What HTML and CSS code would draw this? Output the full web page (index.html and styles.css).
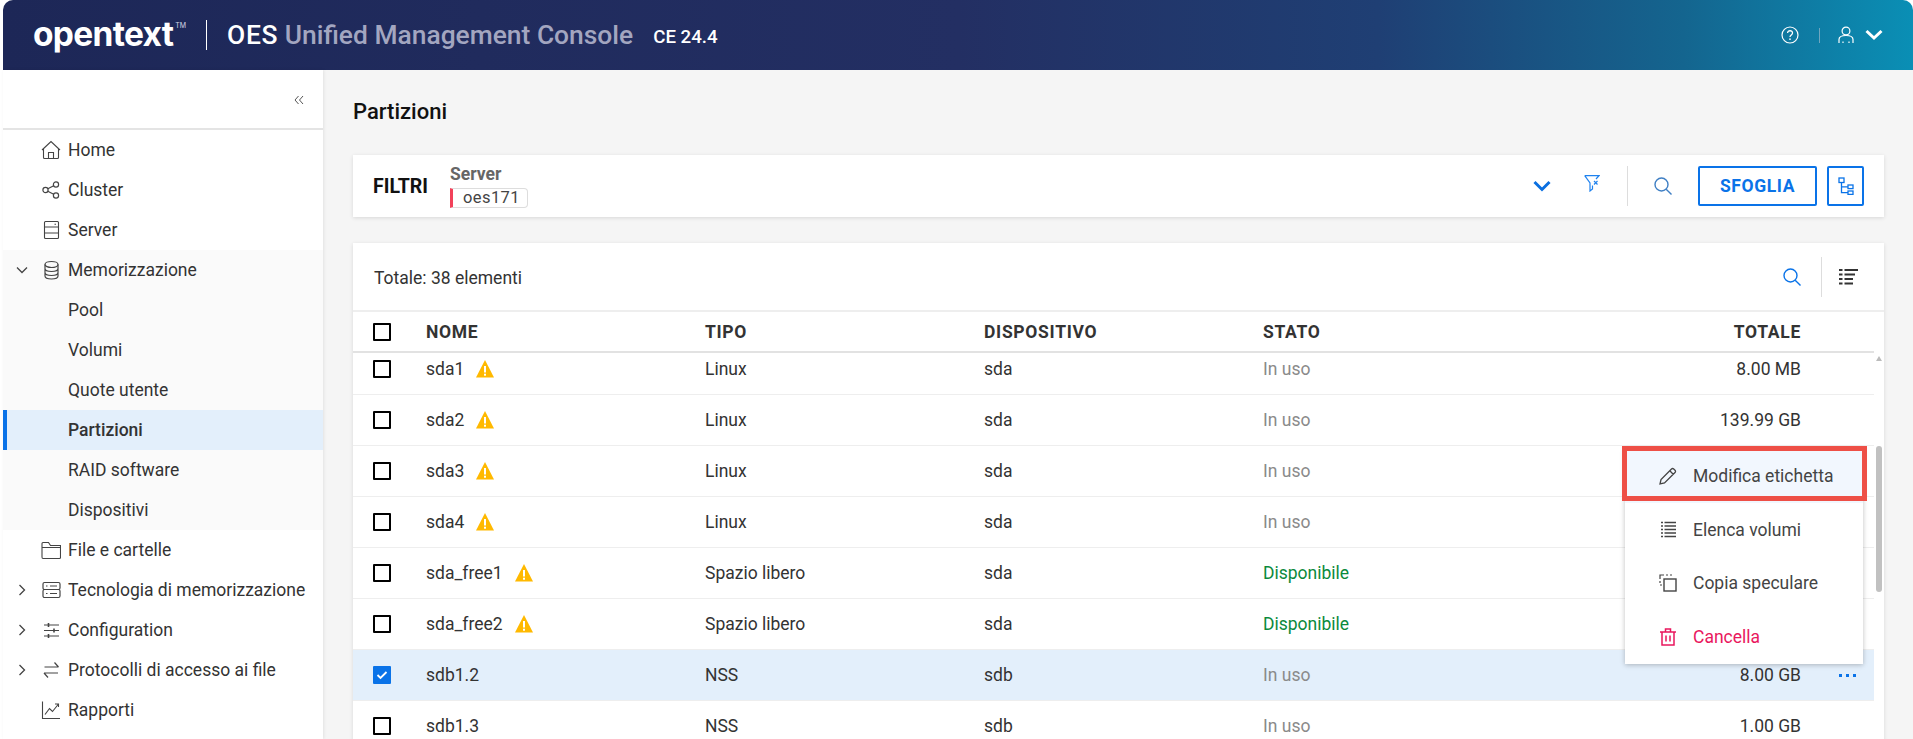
FILE: index.html

```html
<!DOCTYPE html>
<html lang="it">
<head>
  <meta charset="UTF-8" />
  <title>OES Unified Management Console</title>
  <link rel="stylesheet" href="styles.css">
</head>
<body>

<svg class="defs" width="0" height="0">
  <symbol id="warn" viewBox="0 0 18 18">
    <path d="M9 0 L18 17.5 H0 Z" fill="#ffb900"/>
    <rect x="8" y="6" width="2" height="6.5" fill="#fff"/>
    <rect x="8" y="13.7" width="2" height="2" fill="#fff"/>
  </symbol>
  <symbol id="chev-right" viewBox="0 0 10 14">
    <path d="M2.5 2 L7.5 7 L2.5 12" fill="none" stroke="currentColor" stroke-width="1.3"/>
  </symbol>
  <symbol id="search" viewBox="0 0 18 18">
    <circle cx="7.5" cy="7.5" r="6.5" fill="none" stroke="currentColor" stroke-width="1.4"/>
    <path d="M12.2 12.2 L17.5 17.5" stroke="currentColor" stroke-width="1.4"/>
  </symbol>
</svg>

<div class="app">
  <header class="topbar">
    <div class="logo">opentext<sup>TM</sup></div>
    <div class="logo-sep"></div>
    <div class="product"><b>OES</b> <span>Unified Management Console</span></div>
    <div class="version">CE 24.4</div>
    <div class="top-icons">
      <svg class="ic-help" width="18" height="18" viewBox="0 0 18 18">
        <circle cx="9" cy="9" r="8" fill="none" stroke="#fff" stroke-width="1.2"/>
        <path d="M6.6 7 C6.6 3.9 11.6 4.1 11.5 7 C11.5 9 9 8.9 9 11" fill="none" stroke="#fff" stroke-width="1.3"/>
        <rect x="8.3" y="12.4" width="1.4" height="1.6" fill="#fff"/>
      </svg>
      <div class="top-sep"></div>
      <svg class="ic-user" width="16" height="18" viewBox="0 0 16 18">
        <circle cx="8" cy="5" r="3.9" fill="none" stroke="#fff" stroke-width="1.2"/>
        <path d="M1 17 V13.5 C1 10.5 4 9.5 8 9.5 C12 9.5 15 10.5 15 13.5 V17" fill="none" stroke="#fff" stroke-width="1.2"/>
        <path d="M5 15.5 V17 M11 15.5 V17" stroke="#fff" stroke-width="1.2"/>
      </svg>
      <svg width="18" height="12" viewBox="0 0 18 12">
        <path d="M1.5 2 L9 9 L16.5 2" fill="none" stroke="#fff" stroke-width="3"/>
      </svg>
    </div>
  </header>

  <div class="layout">
    <aside class="sidebar">
      <div class="side-top">
        <svg width="10" height="10" viewBox="0 0 10 10">
          <path d="M4.5 1 L1 5 L4.5 9 M9 1 L5.5 5 L9 9" fill="none" stroke="#555" stroke-width="1"/>
        </svg>
      </div>
      <nav>
        <a class="nav-item">
          <span class="nav-chev"></span>
          <svg class="nav-ic" viewBox="0 0 20 20" fill="none" stroke="currentColor" stroke-width="1.1">
            <path d="M1 10 L10 1.5 L19 10 M2.5 9 V17.5 C2.5 18.2 3 18.5 3.5 18.5 H16.5 C17 18.5 17.5 18.2 17.5 17.5 V9 M7.5 18.5 V12.5 H12.5 V18.5"/>
          </svg>
          Home
        </a>
        <a class="nav-item">
          <span class="nav-chev"></span>
          <svg class="nav-ic" viewBox="0 0 20 20" fill="none" stroke="currentColor" stroke-width="1.2">
            <circle cx="4.5" cy="10" r="2.6"/><circle cx="15" cy="4.5" r="2.6"/><circle cx="15" cy="15.5" r="2.6"/>
            <path d="M6.8 8.8 L12.7 5.7 M6.8 11.2 L12.7 14.3"/>
          </svg>
          Cluster
        </a>
        <a class="nav-item">
          <span class="nav-chev"></span>
          <svg class="nav-ic" viewBox="0 0 20 20" fill="none" stroke="currentColor" stroke-width="1.1">
            <rect x="3.5" y="1.5" width="14" height="17" rx="1"/>
            <path d="M3.5 7 H17.5 M3.5 13 H17.5 M13.5 4.2 H15"/>
          </svg>
          Server
        </a>
        <div class="nav-group">
          <a class="nav-item">
            <span class="nav-chev"><svg class="chev-down" width="10" height="14"><use href="#chev-right"/></svg></span>
            <svg class="nav-ic" viewBox="0 0 20 20" fill="none" stroke="currentColor" stroke-width="1.2">
              <ellipse cx="10.5" cy="4.5" rx="6.5" ry="3"/>
              <path d="M4 4.5 V16 C4 17.6 6.5 19 10.5 19 C14.5 19 17 17.6 17 16 V4.5 M4 8.5 C4 10.2 6.5 11.5 10.5 11.5 C14.5 11.5 17 10.2 17 8.5 M4 12.5 C4 14.2 6.5 15.5 10.5 15.5 C14.5 15.5 17 14.2 17 12.5"/>
            </svg>
            Memorizzazione
          </a>
          <a class="nav-item sub">Pool</a>
          <a class="nav-item sub">Volumi</a>
          <a class="nav-item sub">Quote utente</a>
          <a class="nav-item sub active">Partizioni</a>
          <a class="nav-item sub">RAID software</a>
          <a class="nav-item sub">Dispositivi</a>
        </div>
        <a class="nav-item">
          <span class="nav-chev"></span>
          <svg class="nav-ic" viewBox="0 0 20 20" fill="none" stroke="currentColor" stroke-width="1.1">
            <path d="M1 17 V3.5 C1 3 1.3 2.5 2 2.5 H7.5 L9.5 5.5 H19.5 V17.5 C19.5 18 19 18.5 18.5 18.5 H2 C1.3 18.5 1 18 1 17 Z M1 7.5 H19.5"/>
          </svg>
          File e cartelle
        </a>
        <a class="nav-item">
          <span class="nav-chev"><svg width="10" height="14"><use href="#chev-right"/></svg></span>
          <svg class="nav-ic" viewBox="0 0 20 20" fill="none" stroke="currentColor" stroke-width="1.2">
            <rect x="2" y="2.5" width="17" height="7" rx="1.5"/><rect x="2" y="9.5" width="17" height="8" rx="1.5"/>
            <path d="M5 6 H6.5 M9 6 H16 M5 13.5 H6.5 M9 13.5 H16"/>
          </svg>
          Tecnologia di memorizzazione
        </a>
        <a class="nav-item">
          <span class="nav-chev"><svg width="10" height="14"><use href="#chev-right"/></svg></span>
          <svg class="nav-ic" viewBox="0 0 20 20" fill="none" stroke="currentColor" stroke-width="1.2">
            <path d="M3 5 H18 M3 10.5 H18 M3 16 H18"/>
            <path d="M7.5 3 V7 M13 8.5 V12.5 M7.5 14 V18" stroke-width="1.6"/>
          </svg>
          Configuration
        </a>
        <a class="nav-item">
          <span class="nav-chev"><svg width="10" height="14"><use href="#chev-right"/></svg></span>
          <svg class="nav-ic" viewBox="0 0 20 20" fill="none" stroke="currentColor" stroke-width="1.2">
            <path d="M3.5 7 H17.5 M13.5 2.5 L17.5 7 M17 13 H3 M7 17.5 L3 13"/>
          </svg>
          Protocolli di accesso ai file
        </a>
        <a class="nav-item">
          <span class="nav-chev"></span>
          <svg class="nav-ic" viewBox="0 0 20 20" fill="none" stroke="currentColor" stroke-width="1.1">
            <path d="M1.5 1.5 V18.5 H19"/>
            <path d="M4 14.5 L8.5 8.5 L11.5 11.5 L17.5 4 M14 4 H17.5 V7"/>
          </svg>
          Rapporti
        </a>
      </nav>
    </aside>

    <main class="content">
      <h1 class="page-title">Partizioni</h1>

      <section class="card filter-card">
        <div class="filter-title">FILTRI</div>
        <div class="filter-field">
          <div class="filter-label">Server</div>
          <div class="chip">oes171</div>
        </div>
        <div class="filter-tools">
          <svg class="tool-chev" width="18" height="12" viewBox="0 0 18 12">
            <path d="M1.5 2 L9 9.5 L16.5 2" fill="none" stroke="#0a6fe0" stroke-width="3"/>
          </svg>
          <svg class="tool-filter" width="16" height="17" viewBox="0 0 16 17" fill="none" stroke="#1f82ee" stroke-width="1.2">
            <path d="M0.7 0.7 H15 L12 4 M0.7 0.7 L6 8 V16 L8.5 14 V10.5"/>
            <path d="M10 6 L13.5 9.5 M13.5 6 L10 9.5"/>
          </svg>
          <div class="tool-sep"></div>
          <svg class="tool-search" width="18" height="18"><use href="#search"/></svg>
          <button class="btn-browse">SFOGLIA</button>
          <button class="btn-tree">
            <svg width="16" height="18" viewBox="0 0 16 18" fill="none" stroke="#0a73e8" stroke-width="1.3">
              <rect x="1" y="1" width="5" height="4.5"/><rect x="10" y="8" width="5" height="3.6"/><rect x="10" y="14" width="5" height="3.4"/>
              <path d="M3.5 5.5 V15.7 H10 M3.5 9.8 H10"/>
            </svg>
          </button>
        </div>
      </section>

      <section class="card table-card">
        <div class="table-head">
          <div class="total">Totale: 38 elementi</div>
          <svg class="head-search" width="18" height="18"><use href="#search"/></svg>
          <div class="head-sep"></div>
          <svg class="head-list" width="19" height="18" viewBox="0 0 19 18">
            <path d="M0 2 H3.5 M5.5 2 H19 M0 6.5 H3.5 M5.5 6.5 H16 M0 11 H3.5 M5.5 11 H14 M0 15.5 H3.5 M5.5 15.5 H14" stroke="#333" stroke-width="2"/>
          </svg>
        </div>

        <div class="table-wrap">
          <div class="table-main">
            <div class="row row-head">
              <span class="cb"></span>
              <span>NOME</span><span>TIPO</span><span>DISPOSITIVO</span><span>STATO</span><span class="num">TOTALE</span>
            </div>
            <div class="rows">
              <div class="row">
                <span class="cb"></span>
                <span>sda1<svg class="warn"><use href="#warn"/></svg></span><span>Linux</span><span>sda</span><span class="in-use">In uso</span><span class="num">8.00 MB</span>
              </div>
              <div class="row">
                <span class="cb"></span>
                <span>sda2<svg class="warn"><use href="#warn"/></svg></span><span>Linux</span><span>sda</span><span class="in-use">In uso</span><span class="num">139.99 GB</span>
              </div>
              <div class="row">
                <span class="cb"></span>
                <span>sda3<svg class="warn"><use href="#warn"/></svg></span><span>Linux</span><span>sda</span><span class="in-use">In uso</span>
              </div>
              <div class="row">
                <span class="cb"></span>
                <span>sda4<svg class="warn"><use href="#warn"/></svg></span><span>Linux</span><span>sda</span><span class="in-use">In uso</span>
              </div>
              <div class="row">
                <span class="cb"></span>
                <span>sda_free1<svg class="warn"><use href="#warn"/></svg></span><span>Spazio libero</span><span>sda</span><span class="free">Disponibile</span>
              </div>
              <div class="row">
                <span class="cb"></span>
                <span>sda_free2<svg class="warn"><use href="#warn"/></svg></span><span>Spazio libero</span><span>sda</span><span class="free">Disponibile</span>
              </div>
              <div class="row selected">
                <span class="cb checked">
                  <svg width="12" height="10" viewBox="0 0 12 10"><path d="M1.5 5 L4.5 8 L10.5 2" fill="none" stroke="#fff" stroke-width="1.8"/></svg>
                </span>
                <span>sdb1.2</span><span>NSS</span><span>sdb</span><span class="in-use">In uso</span><span class="num">8.00 GB</span>
                <span class="dots"><i></i><i></i><i></i></span>
              </div>
              <div class="row">
                <span class="cb"></span>
                <span>sdb1.3</span><span>NSS</span><span>sdb</span><span class="in-use">In uso</span><span class="num">1.00 GB</span>
              </div>
            </div>
          </div>
          <div class="scrollbar">
            <div class="scroll-up"></div>
            <div class="scroll-thumb"></div>
          </div>
        </div>

        <div class="menu">
          <div class="menu-item hover">
            <svg width="18" height="18" viewBox="0 0 18 18" fill="none" stroke="#444" stroke-width="1.3">
              <path d="M1 17 L2 12.5 L12.5 2 C13.2 1.3 14 1.3 14.7 2 L16 3.3 C16.7 4 16.7 4.8 16 5.5 L5.5 16 Z M10.8 3.8 L14.2 7.2"/>
            </svg>
            Modifica etichetta
          </div>
          <div class="menu-item">
            <svg width="18" height="18" viewBox="0 0 18 18">
              <path d="M2 1.5 H4 M5.5 1.5 H17 M2 5 H4 M5.5 5 H17 M2 8.5 H4 M5.5 8.5 H17 M2 12 H4 M5.5 12 H17 M2 15.5 H4 M5.5 15.5 H17" stroke="#444" stroke-width="1.3"/>
            </svg>
            Elenca volumi
          </div>
          <div class="menu-item">
            <svg width="18" height="18" viewBox="0 0 18 18" fill="none" stroke="#444" stroke-width="1.2">
              <path d="M1 5 V1 H5 M7 1 H9 M11 1 H13 M1 7 V9 M1 11 H3"/>
              <rect x="5" y="5" width="12" height="12" stroke-width="1.4"/>
            </svg>
            Copia speculare
          </div>
          <div class="menu-item danger">
            <svg width="18" height="18" viewBox="0 0 18 18" fill="none" stroke="#e9175d" stroke-width="1.5">
              <path d="M1 4 H17 M6.5 4 V1 H11.5 V4 M3 4 V17 H15 V4 M7 7.5 V13.5 M11 7.5 V13.5"/>
            </svg>
            Cancella
          </div>
          <div class="red-box"></div>
        </div>
      </section>
    </main>
  </div>
</div>

</body>
</html>
```

FILE: styles.css

```css
* {
  box-sizing: border-box;
}
html, body {
  height: 100%;
  overflow: hidden;
}
body {
  margin: 0;
  background: #fff;
  color: #333;
  font-family: Roboto, "Liberation Sans", sans-serif;
  font-size: 17.5px;
}
.defs {
  position: absolute;
}
.app {
  height: 100vh;
  padding-left: 3px;
  display: flex;
  flex-direction: column;
}

/* top bar */
.topbar {
  height: 70px;
  flex: none;
  display: flex;
  align-items: center;
  padding-left: 30px;
  padding-right: 30px;
  border-radius: 10px 10px 0 0;
  background: linear-gradient(90deg, #1d2757 0%, #232f63 50%, #1f3f74 72%, #14658f 88%, #0a8fb5 100%);
  color: #fff;
}
.logo {
  font-family: Inter, sans-serif;
  font-weight: 700;
  font-size: 33.5px;
  letter-spacing: -0.7px;
  line-height: 40px;
  width: 173px;
  margin-top: -2px;
  white-space: nowrap;
}
.logo sup {
  font-size: 7px;
  font-weight: 400;
  letter-spacing: 0;
  vertical-align: 18px;
  line-height: 0;
  margin-left: 2px;
  color: #d5d7e4;
}
.logo-sep {
  width: 1px;
  height: 30px;
  background: #fff;
  margin-right: 20px;
}
.product {
  font-size: 26.4px;
  font-weight: 500;
}
.product b {
  font-weight: 500;
  letter-spacing: 0.7px;
}
.product span {
  color: #a3a6c0;
}
.version {
  font-size: 18.7px;
  font-weight: 500;
  margin-left: 20px;
  padding-top: 3px;
}
.top-icons {
  margin-left: auto;
  display: flex;
  align-items: center;
}
.top-sep {
  width: 1px;
  height: 15px;
  background: #6fa6bf;
  margin: 0 18px 0 20px;
}
.ic-user {
  margin-right: 11px;
}

.layout {
  flex: 1;
  display: flex;
  min-height: 0;
}

/* side menu */
.sidebar {
  width: 320px;
  flex: none;
  background: #fff;
  box-shadow: 1px 0 3px rgba(0,0,0,0.08);
  z-index: 1;
}
.side-top {
  height: 60px;
  border-bottom: 2px solid #e4e4e4;
  display: flex;
  justify-content: flex-end;
  padding: 25px 19px 0 0;
}
.nav-item {
  height: 40px;
  display: flex;
  align-items: center;
  color: #333;
}
.nav-chev {
  width: 38px;
  padding-left: 14px;
  display: flex;
  align-items: center;
  flex: none;
  color: #444;
}
.chev-down {
  transform: rotate(90deg);
}
.nav-ic {
  width: 20px;
  height: 20px;
  flex: none;
  margin-right: 7px;
  color: #444;
}
.nav-group {
  background: #fafafa;
}
.sub {
  padding-left: 65px;
}
.sub.active {
  background: #e3effb;
  box-shadow: inset 4px 0 0 #0a73e8;
  font-weight: 500;
}

/* main area */
.content {
  flex: 1;
  min-width: 0;
  background: #f5f5f5;
  padding: 0 29px 0 30px;
  overflow: hidden;
}
.page-title {
  margin: 0;
  height: 85px;
  line-height: 84px;
  font-size: 22px;
  font-weight: 500;
  color: #111;
}
.card {
  background: #fff;
  box-shadow: 0 1px 4px rgba(0,0,0,0.12);
}
.filter-card {
  height: 62px;
  display: flex;
  align-items: center;
  padding: 0 20px;
  margin-bottom: 26px;
}
.filter-title {
  font-size: 19.5px;
  font-weight: 700;
  color: #111;
  width: 77px;
}
.filter-label {
  color: #666;
  font-weight: 700;
  line-height: 20px;
  margin-bottom: 4px;
}
.chip {
  width: 78px;
  height: 20px;
  border: 1px solid #ddd;
  border-left: 3px solid #f2415a;
  border-radius: 0 4px 4px 0;
  padding-left: 10px;
  font-size: 16.5px;
  line-height: 18px;
  letter-spacing: 0.4px;
  color: #444;
}
.filter-tools {
  margin-left: auto;
  display: flex;
  align-items: center;
}
.tool-filter {
  margin: -5px 0 0 33px;
}
.tool-sep {
  width: 1px;
  height: 40px;
  background: #ddd;
  margin: 0 26px 0 27px;
}
.tool-search {
  color: #3f7fc4;
  margin-right: 26px;
}
button {
  font-family: inherit;
  background: #fff;
  border: 2px solid #0a73e8;
  border-radius: 2px;
  height: 40px;
  padding: 0;
  color: #0a73e8;
}
.btn-browse {
  width: 119px;
  font-size: 17.5px;
  font-weight: 700;
  letter-spacing: 0.6px;
  margin-right: 10px;
}
.btn-tree {
  width: 37px;
  display: flex;
  align-items: center;
  justify-content: center;
}

/* table */
.table-card {
  position: relative;
  height: 600px;
}
.table-head {
  height: 69px;
  border-bottom: 2px solid #eee;
  display: flex;
  align-items: center;
  padding: 0 26px 0 21px;
}
.total {
  margin-right: auto;
  padding-top: 2px;
}
.head-search {
  color: #0a73e8;
}
.head-sep {
  width: 1px;
  height: 40px;
  background: #ddd;
  margin: 0 17px 0 20px;
}
.table-wrap {
  display: flex;
  height: 440px;
}
.table-main {
  flex: 1;
  min-width: 0;
  overflow: hidden;
}
.row {
  height: 51px;
  display: grid;
  grid-template-columns: 53px 279px 279px 279px 1fr auto;
  align-items: center;
  padding-left: 20px;
  padding-right: 73px;
  border-bottom: 1px solid #eee;
  position: relative;
}
.row > span:nth-child(2) {
  display: flex;
  align-items: center;
}
.row-head {
  height: 41px;
  font-weight: 700;
  letter-spacing: 0.7px;
  color: #333;
  border-bottom: 2px solid #e2e2e2;
  position: relative;
  z-index: 1;
  background: #fff;
}
.rows {
  margin-top: -9px;
}
.selected {
  background: #e3effb;
}
.cb {
  width: 18px;
  height: 18px;
  border: 2px solid #000;
  border-radius: 1px;
}
.cb.checked {
  background: #0a73e8;
  border-color: #0a73e8;
  display: flex;
  align-items: center;
  justify-content: center;
}
.warn {
  width: 18px;
  height: 18px;
  margin-left: 12px;
}
.num {
  text-align: right;
}
.in-use {
  color: #8a8a8a;
}
.free {
  color: #0b8a3c;
}
.dots {
  position: absolute;
  left: 1486px;
  display: flex;
  gap: 4px;
}
.dots i {
  width: 3px;
  height: 3px;
  background: #0a73e8;
}
.scrollbar {
  width: 10px;
  flex: none;
  padding-left: 2px;
}
.scroll-up {
  width: 0;
  height: 0;
  margin: 44px 0 0 0;
  border: 3px solid transparent;
  border-bottom: 5px solid #bbb;
  border-top: 0;
}
.scroll-thumb {
  width: 6px;
  height: 146px;
  margin-top: 85px;
  background: #c1c1c1;
  border-radius: 3px;
}

/* row menu */
.menu {
  position: absolute;
  left: 1272px;
  top: 206px;
  width: 238px;
  background: #fff;
  box-shadow: 0 1px 5px rgba(0,0,0,0.25);
  z-index: 2;
}
.menu-item {
  height: 53.75px;
  display: flex;
  align-items: center;
  gap: 16px;
  padding-left: 34px;
  color: #444;
}
.menu-item.hover {
  background: #f2f7fe;
}
.menu-item.danger {
  color: #e9175d;
}
.red-box {
  position: absolute;
  left: -3px;
  top: -3px;
  width: 245px;
  height: 55px;
  border: 5px solid #ee4f46;
}
```
